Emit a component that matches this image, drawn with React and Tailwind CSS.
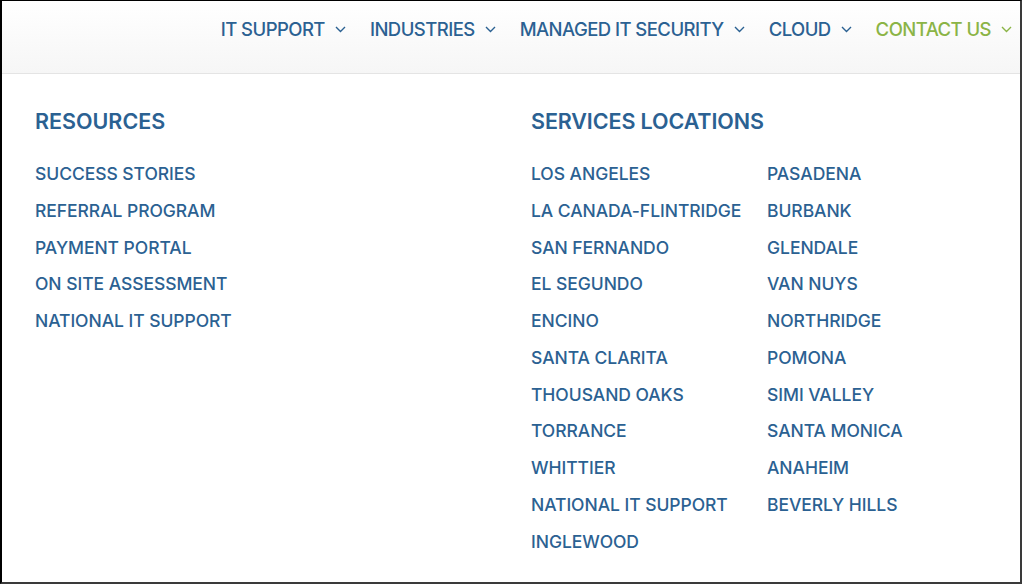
import React from "react";

const navItems = [
  { label: "IT SUPPORT" },
  { label: "INDUSTRIES" },
  { label: "MANAGED IT SECURITY" },
  { label: "CLOUD" },
  { label: "CONTACT US", green: true },
];

const resources = [
  "SUCCESS STORIES",
  "REFERRAL PROGRAM",
  "PAYMENT PORTAL",
  "ON SITE ASSESSMENT",
  "NATIONAL IT SUPPORT",
];

const locationsLeft = [
  "LOS ANGELES",
  "LA CANADA-FLINTRIDGE",
  "SAN FERNANDO",
  "EL SEGUNDO",
  "ENCINO",
  "SANTA CLARITA",
  "THOUSAND OAKS",
  "TORRANCE",
  "WHITTIER",
  "NATIONAL IT SUPPORT",
  "INGLEWOOD",
];

const locationsRight = [
  "PASADENA",
  "BURBANK",
  "GLENDALE",
  "VAN NUYS",
  "NORTHRIDGE",
  "POMONA",
  "SIMI VALLEY",
  "SANTA MONICA",
  "ANAHEIM",
  "BEVERLY HILLS",
];

const Chevron = () => (
  <svg width="11" height="7" viewBox="0 0 11 7" fill="none" className="ml-[10px] mt-[1px]">
    <path d="M1 1l4.5 4.5L10 1" stroke="currentColor" strokeWidth="1.4" />
  </svg>
);

const LinkList = ({ items }) => (
  <ul className="flex flex-col gap-[13.75px]">
    {items.map((item, i) => (
      <li key={i} className="text-[17.5px] leading-[23px] tracking-[-0.05px] text-[#2b6192] font-medium">
        {item}
      </li>
    ))}
  </ul>
);

export default function App() {
  return (
    <div className="w-[1024px] h-[586px] bg-white" style={{ fontFamily: "Inter, 'Noto Sans', sans-serif" }}>
      <div className="w-[1022px] h-[584px] border-l-2 border-l-black border-t border-t-black border-r-2 border-r-[#3a3a3a] border-b-2 border-b-[#3a3a3a] flex flex-col">
        <header className="h-[73px] bg-gradient-to-b from-white to-[#f6f6f6] border-b border-[#e4e4e4] flex items-start justify-end pt-[17px] pr-[8px]">
          <nav className="flex items-center gap-[24px]">
            {navItems.map((item, i) => (
              <div
                key={i}
                className={`flex items-center text-[18.5px] leading-[22px] tracking-[-0.55px] font-medium ${item.green ? "text-[#8bb446]" : "text-[#2b6192]"}`}
              >
                {item.label}
                <Chevron />
              </div>
            ))}
          </nav>
        </header>
        <main className="flex pl-[33px] pt-[34px]">
          <section className="w-[496px]">
            <h2 className="text-[21.5px] leading-[26px] tracking-[0px] font-semibold text-[#2b6192] mb-[28px]">RESOURCES</h2>
            <LinkList items={resources} />
          </section>
          <section>
            <h2 className="text-[21.5px] leading-[26px] tracking-[-0.1px] font-semibold text-[#2b6192] mb-[28px]">SERVICES LOCATIONS</h2>
            <div className="flex">
              <div className="w-[236px]">
                <LinkList items={locationsLeft} />
              </div>
              <LinkList items={locationsRight} />
            </div>
          </section>
        </main>
      </div>
    </div>
  );
}
